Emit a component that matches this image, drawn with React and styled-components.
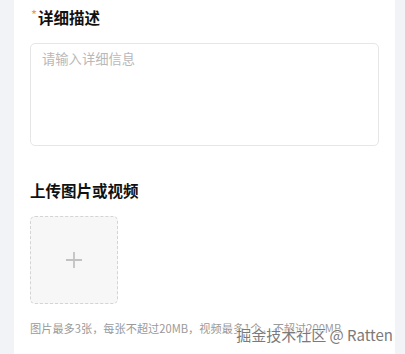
import React from 'react';
import styled, { createGlobalStyle } from 'styled-components';

const GlobalStyle = createGlobalStyle`
  html, body {
    margin: 0;
    padding: 0;
    background: #f2f3f7;
    font-family: "Noto Sans CJK SC", "Liberation Sans", sans-serif;
  }
`;

const Page = styled.div`
  position: relative;
  height: 354px;
  padding: 0 10px 0 14px;
  overflow: hidden;
`;

const Card = styled.div`
  background: #ffffff;
  height: 100%;
  padding: 7px 16px 0 16px;
  box-sizing: border-box;
`;

const Label = styled.div`
  display: flex;
  align-items: center;
  font-size: 15.5px;
  font-weight: 700;
  line-height: 20px;
  color: #111;
  margin-top: ${props => props.top || 0}px;
`;

const Star = styled.span`
  color: #e6a23c;
  font-weight: 400;
  font-size: 13px;
  margin-left: 1px;
  margin-right: 1px;
  align-self: flex-start;
  line-height: 16px;
`;

const TextArea = styled.textarea`
  display: block;
  width: 100%;
  height: 103px;
  box-sizing: border-box;
  margin-top: 16px;
  padding: 5px 11px;
  border: 1px solid #e6e6e6;
  border-radius: 5px;
  resize: none;
  outline: none;
  font-family: inherit;
  font-size: 13.3px;
  line-height: 20px;
  color: #333;

  &::placeholder {
    color: #b8b8b8;
  }
`;

const UploadBox = styled.div`
  width: 88px;
  height: 88px;
  margin-top: 16px;
  box-sizing: border-box;
  border: 1px dashed #d4d4d4;
  border-radius: 5px;
  background: #f7f7f7;
  display: flex;
  align-items: center;
  justify-content: center;
`;

const Hint = styled.div`
  margin-top: 16px;
  font-size: 11.2px;
  line-height: 16px;
  color: #9a9a9a;
  white-space: nowrap;
`;

const Watermark = styled.div`
  position: absolute;
  right: 12px;
  bottom: 9px;
  font-size: 15px;
  line-height: 20px;
  color: #7a7a7a;
  white-space: nowrap;
  text-shadow: 0 0 2px #fff, 0 0 2px #fff, 0 0 3px #fff;
`;

function PlusIcon() {
  return (
    <svg width="18" height="18" viewBox="0 0 18 18">
      <path d="M9 1v16M1 9h16" stroke="#c2c2c2" strokeWidth="1.8" fill="none" />
    </svg>
  );
}

export default function App() {
  return (
    <>
      <GlobalStyle />
      <Page>
        <Card>
          <Label>
            <Star>*</Star>详细描述
          </Label>
          <TextArea placeholder="请输入详细信息" />
          <Label top={34}>上传图片或视频</Label>
          <UploadBox>
            <PlusIcon />
          </UploadBox>
          <Hint>图片最多3张，每张不超过20MB，视频最多1个，不超过200MB</Hint>
        </Card>
        <Watermark>掘金技术社区 @ Ratten</Watermark>
      </Page>
    </>
  );
}
